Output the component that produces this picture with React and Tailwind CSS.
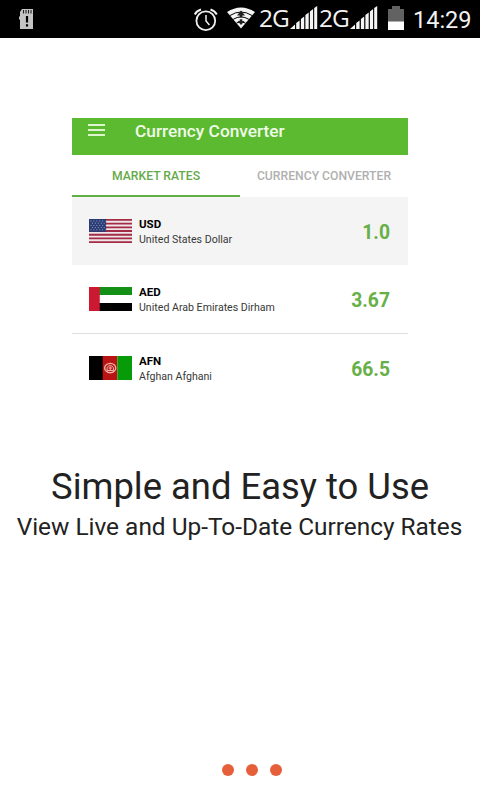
import React from "react";

function SdCard() {
  return (
    <svg className="ml-[19px] mt-[9px] block" width="15" height="20" viewBox="0 0 15 20">
      <path d="M3 0H14V20H1V11L0 10V8L1 7V3Z" fill="#c4c4c4" />
      <path d="M4.5 1v3.5M7 1v3.5M9.5 1v3.5M12 1v3.5" stroke="#222" strokeWidth="1.1" />
      <path d="M8 7v6.5M8 15.2v2.3" stroke="#000" strokeWidth="2.2" />
    </svg>
  );
}

function Alarm() {
  return (
    <svg className="ml-[160px] mt-[8px] block" width="24" height="24" viewBox="0 0 24 24" fill="none" stroke="#f0f0f0">
      <circle cx="11.8" cy="12.7" r="9.4" strokeWidth="1.8" />
      <path d="M12 7v6l3.4 4" strokeWidth="1.5" />
      <path d="M.8 6.500Q2.5 3 7 1.5M16.500 1.5Q21 3 22.800 6.500" strokeWidth="2" />
    </svg>
  );
}

function Wifi() {
  return (
    <svg className="ml-[9px] mt-[7px] block" width="28" height="22" viewBox="0 0 28 22">
      <path d="M0 5Q14-4 28 5L14 21.5Z" fill="#f5f5f5" />
      <path d="M3 8.500Q14 1.500 25 8.500M6.200 12.300Q14 7.500 21.800 12.300M9.500 16Q14 13.500 18.500 16" stroke="#000" strokeWidth="1" fill="none" />
      <path d="M14 3.500L18 8.500H15.300V10.500H12.700V8.500H10ZM14 18L10.500 14H12.700V12.200H15.300V14H17.500Z" fill="#222" />
    </svg>
  );
}

function Signal() {
  return (
    <svg className="ml-0 mt-[6px] block" width="28" height="24" viewBox="0 0 28 24" fill="#f5f5f5">
      <path d="M0 23L5 18.500V23Z" />
      <path d="M6.200 17L9.600 14.500V23H6.200ZM10.900 13L14.200 10.500V23H10.900ZM15.400 9L18.700 6.500V23H15.400ZM19.900 5.500L23.100 3V23H19.900ZM24.200 2L27.200 0V23H24.200Z" />
    </svg>
  );
}

function StatusBar() {
  return (
    <div className="flex h-[38px] items-start bg-black text-[#f2f2f2]">
      <SdCard />
      <Alarm />
      <Wifi />
      <span className="ml-[4px] mt-[4px] w-[31px] whitespace-nowrap font-['Open_Sans',sans-serif] text-[24.500px] leading-[28px] tracking-[-1px]">2G</span>
      <Signal />
      <span className="ml-px mt-[4px] w-[31px] whitespace-nowrap font-['Open_Sans',sans-serif] text-[24.500px] leading-[28px] tracking-[-1px]">2G</span>
      <Signal />
      <svg className="ml-[10px] mt-[6px] block" width="16" height="24" viewBox="0 0 16 24">
        <path d="M4 0h8v3h4v21H0V3h4Z" fill="#626262" />
        <path d="M0 15.500h16V24H0Z" fill="#fff" />
      </svg>
      <span className="ml-[9px] mt-[6px] whitespace-nowrap text-[23.500px] leading-[28px]">14:29</span>
    </div>
  );
}

function FlagUS() {
  return (
    <svg className="block" width="43" height="24" viewBox="0 0 44 24" preserveAspectRatio="none">
      <rect width="44" height="24" fill="#eee6e8" />
      <path d="M0 .9H44M0 4.600H44M0 8.300H44M0 12H44M0 15.700H44M0 19.400H44M0 23.100H44" stroke="#a32b46" strokeWidth="1.85" />
      <rect width="17.500" height="12.900" fill="#293c73" />
      <path d="M1.500 2H17M3 4.200H17M1.500 6.400H17M3 8.600H17M1.500 10.800H17" stroke="#aab7d4" strokeWidth=".9" strokeDasharray="1 2" />
    </svg>
  );
}

function FlagAE() {
  return (
    <svg className="block" width="43" height="24" viewBox="0 0 44 24" preserveAspectRatio="none">
      <rect width="44" height="24" fill="#fff" />
      <rect width="44" height="8" fill="#159017" />
      <rect y="16" width="44" height="8" fill="#000" />
      <rect width="11" height="24" fill="#cc1830" />
    </svg>
  );
}

function FlagAF() {
  return (
    <svg className="block" width="43" height="24" viewBox="0 0 44 24" preserveAspectRatio="none">
      <rect width="15" height="24" fill="#000" />
      <rect x="14" width="15" height="24" fill="#b91313" />
      <rect x="29" width="15" height="24" fill="#079a09" />
      <g fill="none" stroke="#edb5a8">
        <ellipse cx="21.700" cy="12" rx="5.700" ry="4.700" strokeWidth="1.300" />
        <path d="M18.500 14.500V11.500Q21.700 7.500 25 11.500V14.500ZM20 12H23.500M21.700 10.500V14M18.500 16.200Q21.700 17.500 25 16.200" strokeWidth="1" />
      </g>
    </svg>
  );
}

const rates = [
  { code: "USD", name: "United States Dollar", rate: "1.0", Flag: FlagUS, row: "h-[68px] bg-[#f4f4f4]" },
  { code: "AED", name: "United Arab Emirates Dirham", rate: "3.67", Flag: FlagAE, row: "h-[69px] border-b border-[#dedede] bg-white" },
  { code: "AFN", name: "Afghan Afghani", rate: "66.5", Flag: FlagAF, row: "h-[68px] bg-white" },
];

function Preview() {
  return (
    <div className="mx-auto mt-[80px] w-[336px]">
      <div className="flex h-[37px] items-start bg-[#5cba30] text-[#f0fbe9]">
        <div className="ml-4 mt-[6px] flex w-[17px] flex-col gap-[3px]">
          <span className="h-[2px] bg-[#dcf5ce]" />
          <span className="h-[2px] bg-[#dcf5ce]" />
          <span className="h-[2px] bg-[#dcf5ce]" />
        </div>
        <h2 className="ml-[30px] mt-[3px] text-[17.300px] font-medium leading-[20px]">Currency Converter</h2>
      </div>
      <div className="flex h-[42px] text-center text-[12.200px] font-medium leading-[43px]">
        <div className="w-1/2 border-b-2 border-[#61b046] text-[#65aa49]">MARKET RATES</div>
        <div className="w-1/2 text-[#b0b0b0]">CURRENCY CONVERTER</div>
      </div>
      {rates.map(({ code, name, rate, Flag, row }) => (
        <div key={code} className={"flex items-center pl-[17px] pr-[18px] " + row}>
          <Flag />
          <div className="ml-[7px] grow whitespace-nowrap pt-[2px]">
            <div className="text-[11.500px] font-bold leading-[16px] text-black">{code}</div>
            <div className="text-[10.600px] leading-[16px] text-[#383838]">{name}</div>
          </div>
          <div className="pt-[4px] text-[19.300px] font-bold leading-[24px] text-[#67b048]">{rate}</div>
        </div>
      ))}
    </div>
  );
}

export default function App() {
  return (
    <div className="flex h-[800px] w-[480px] flex-col overflow-hidden bg-white font-[Roboto,sans-serif]">
      <StatusBar />
      <Preview />
      <div className="mt-[63px] whitespace-nowrap text-center text-[#222]">
        <h1 className="text-[36.400px] leading-[44px]">Simple and Easy to Use</h1>
        <p className="pr-px text-[24.400px] leading-[36px]">View Live and Up-To-Date Currency Rates</p>
      </div>
      <div className="mb-6 ml-[222px] mt-auto flex gap-3">
        <span className="size-3 rounded-full bg-[#e65f3b]" />
        <span className="size-3 rounded-full bg-[#e65f3b]" />
        <span className="size-3 rounded-full bg-[#e65f3b]" />
      </div>
    </div>
  );
}
